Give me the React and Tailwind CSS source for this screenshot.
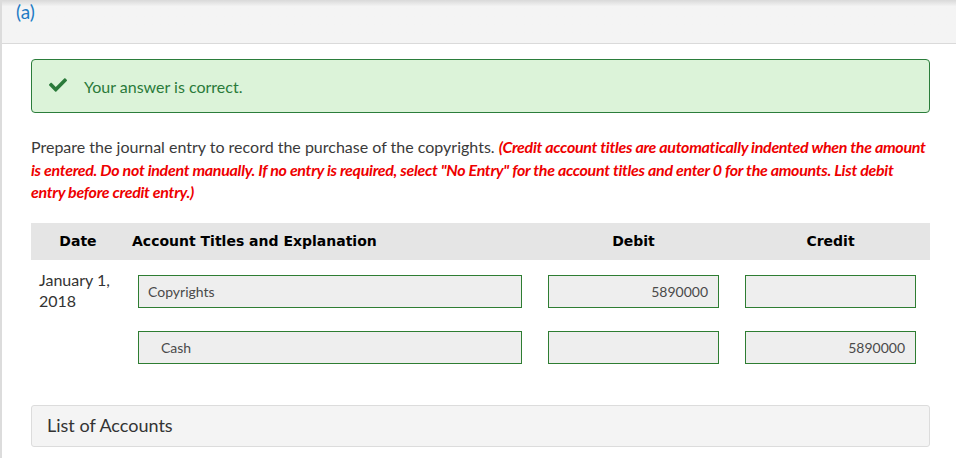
export default function App() {
  const lato = { fontFamily: 'Lato, "Open Sans", sans-serif' };
  return (
    <div className="w-[956px] h-[458px] bg-white border-l-2 border-[#dcdcdc] overflow-hidden" style={lato}>
      <div className="h-[44px] bg-gradient-to-b from-[#d9d9d9] via-[#f4f4f4] via-[15%] to-[#f4f4f4] border-b border-[#dadada] pl-[14px] pt-[1px]">
        <span className="text-[19px] leading-[22px] text-[#1d7bc4]">(a)</span>
      </div>
      <div className="pl-[29px] pr-[26px]">
        <div className="mt-[15px] h-[54px] bg-[#dcf3d9] border border-[#2b7d3b] rounded-[4px] flex items-center pl-[17px]">
          <svg viewBox="0 64 512 384" className="w-[18px] h-[14px] text-[#2a7a3a] -mt-[2px]" fill="currentColor">
            <path d="M173.898 439.404l-166.4-166.4c-9.997-9.997-9.997-26.206 0-36.204l36.203-36.204c9.997-9.998 26.207-9.998 36.204 0L192 312.69 432.095 72.596c9.997-9.997 26.207-9.997 36.204 0l36.203 36.204c9.997 9.997 9.997 26.206 0 36.204l-294.4 294.401c-9.998 9.997-26.207 9.997-36.204-.001z" />
          </svg>
          <span className="ml-[17px] text-[16px] text-[#2a7a3a] mt-[2px]">Your answer is correct.</span>
        </div>
        <p className="mt-[23px] text-[16px] leading-[22.5px] text-[#3a3a3a] whitespace-nowrap">
          Prepare the journal entry to record the purchase of the copyrights.{' '}
          <span className="italic font-bold text-[#ee0000] tracking-[-0.3px]">
            (Credit account titles are automatically indented when the amount
            <br />
            is entered. Do not indent manually. If no entry is required, select "No Entry" for the account titles and enter 0 for the amounts. List debit
            <br />
            entry before credit entry.)
          </span>
        </p>
        <div className="mt-[19px] h-[37px] bg-[#e5e5e5] grid grid-cols-[101px_403px_197px_197px] items-center font-bold text-black" style={{ fontFamily: '"DejaVu Sans", Verdana, sans-serif' }}>
          <div className="text-center pr-[7px] text-[14px]">Date</div>
          <div className="text-[14px]">Account Titles and Explanation</div>
          <div className="text-center text-[14px]">Debit</div>
          <div className="text-center text-[14px]">Credit</div>
        </div>
        <div className="grid grid-cols-[101px_403px_197px_197px] grid-rows-[33px_33px] mt-[15px] gap-y-[23px]">
          <div className="pl-[8px] h-[33px] -mt-[6px] text-[16px] leading-[21px] text-[#333] whitespace-nowrap">January 1,<br />2018</div>
          <div className="pl-[6px] pr-[13px]">
            <div className="h-[33px] border border-[#2e7d32] bg-[#eeeeee] flex items-center pl-[9px] text-[14px] text-[#4a4a4a]">Copyrights</div>
          </div>
          <div className="px-[13px]">
            <div className="h-[33px] border border-[#2e7d32] bg-[#eeeeee] flex items-center justify-end pr-[10px] text-[14px] text-[#4a4a4a]">5890000</div>
          </div>
          <div className="px-[13px]">
            <div className="h-[33px] border border-[#2e7d32] bg-[#eeeeee]"></div>
          </div>
          <div></div>
          <div className="pl-[6px] pr-[13px]">
            <div className="h-[33px] border border-[#2e7d32] bg-[#eeeeee] flex items-center pl-[22px] text-[14px] text-[#4a4a4a]">Cash</div>
          </div>
          <div className="px-[13px]">
            <div className="h-[33px] border border-[#2e7d32] bg-[#eeeeee]"></div>
          </div>
          <div className="px-[13px]">
            <div className="h-[33px] border border-[#2e7d32] bg-[#eeeeee] flex items-center justify-end pr-[10px] text-[14px] text-[#4a4a4a]">5890000</div>
          </div>
        </div>
        <div className="mt-[41px] h-[42px] bg-[#f4f4f4] border border-[#dcdcdc] rounded-[3px] flex items-center pl-[15px] text-[18px] text-[#333]">
          List of Accounts
        </div>
      </div>
    </div>
  );
}
